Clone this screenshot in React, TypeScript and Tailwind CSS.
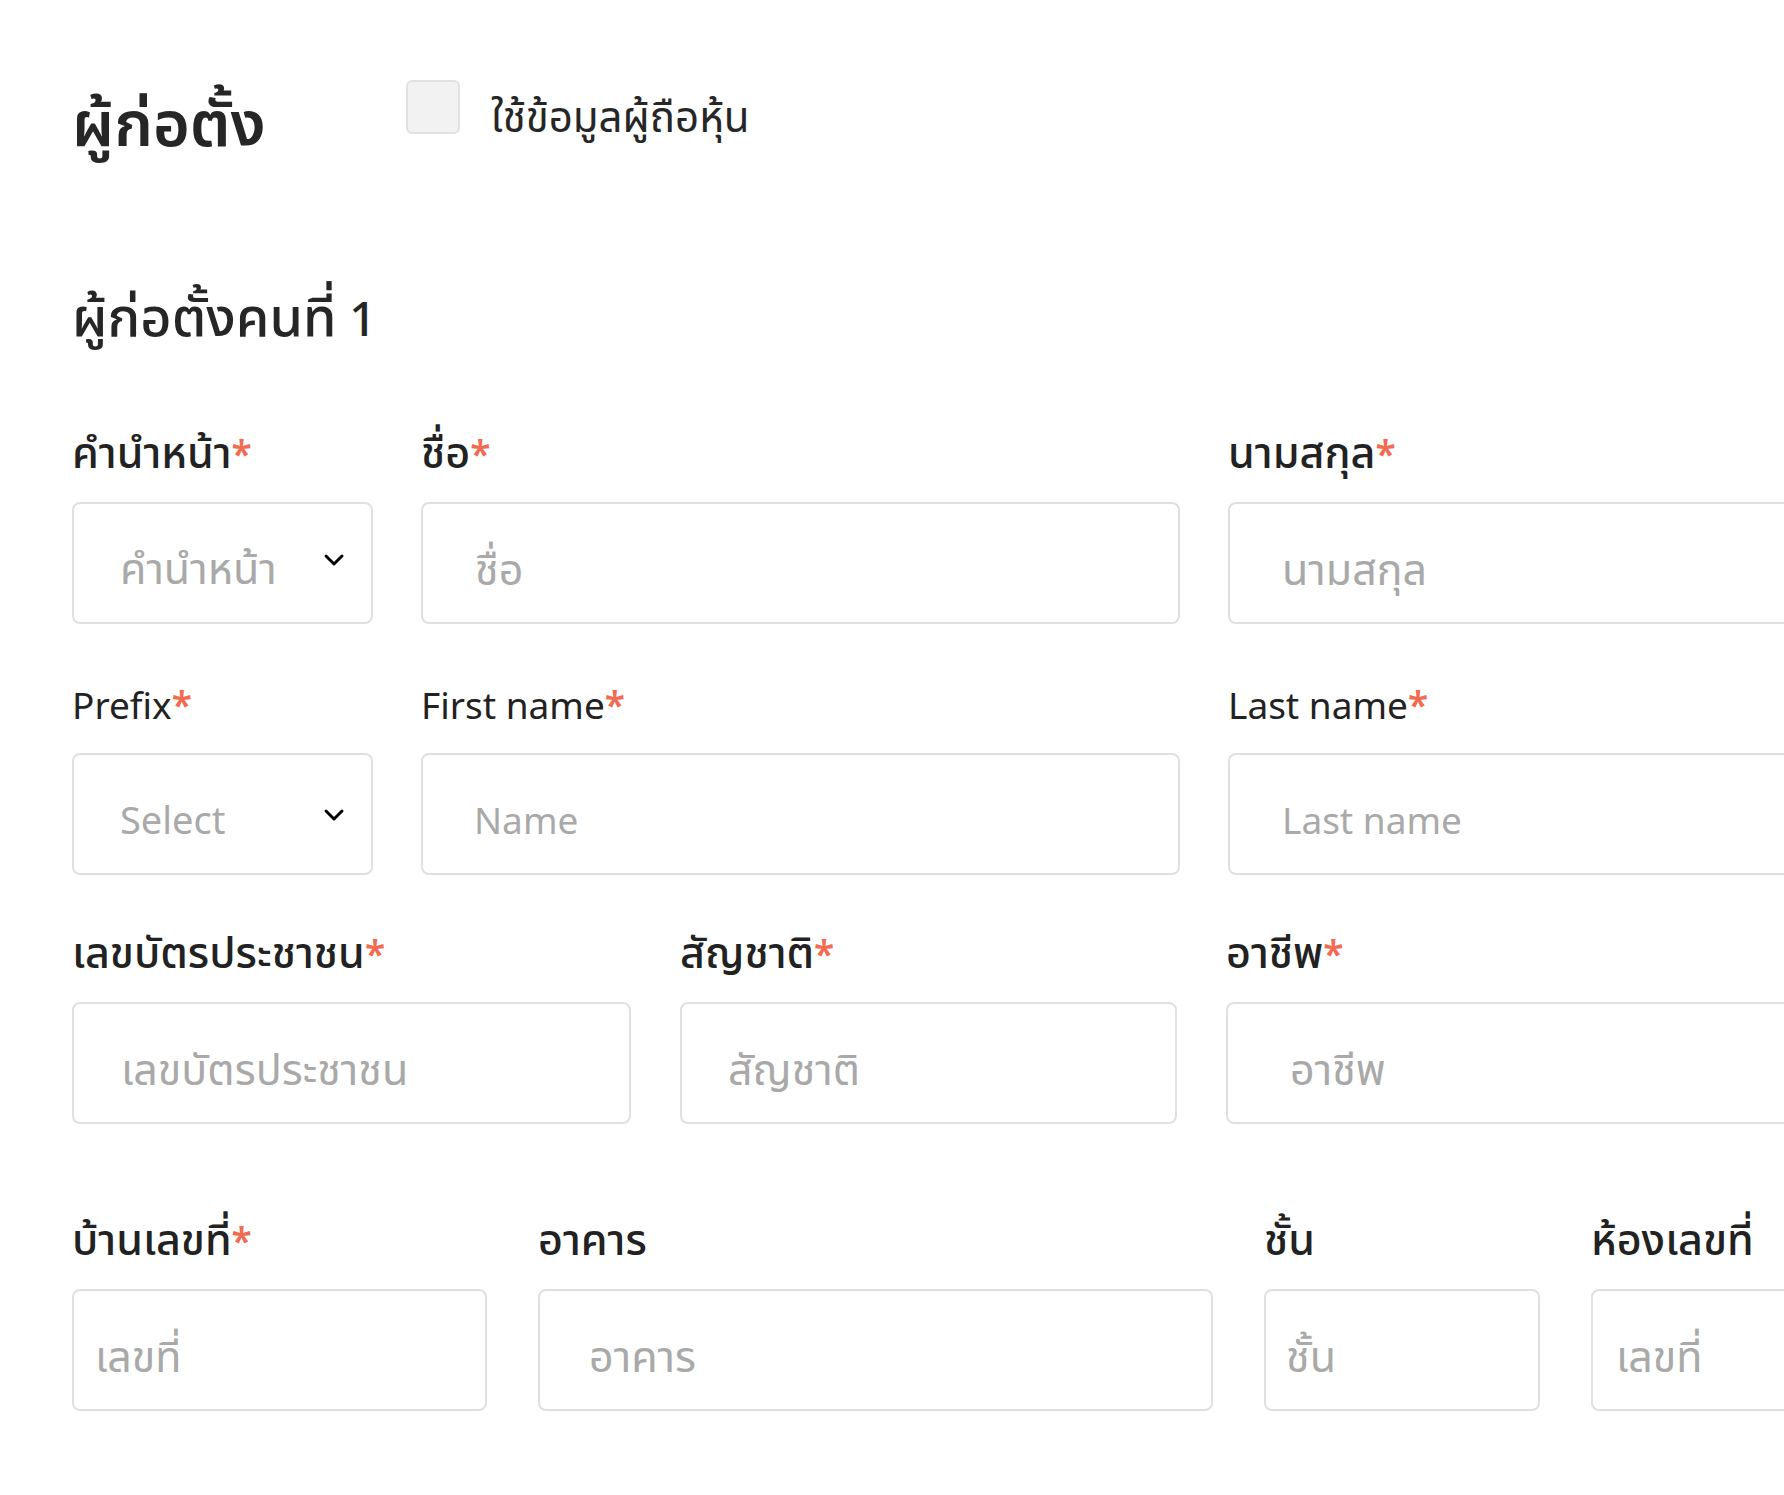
import { ChevronDown } from "lucide-react";

const font = { fontFamily: '"Noto Sans", "Noto Sans Thai", sans-serif' };
const isThai = (s: string) => /[\u0E00-\u0E7F]/.test(s);

function Label({ text, required }: { text: string; required?: boolean }) {
  const thai = isThai(text);
  return (
    <div
      className={
        thai
          ? "text-[43px] leading-[48px] font-medium text-[#222] whitespace-nowrap mb-[26px]"
          : "text-[37px] leading-[48px] font-normal text-[#222] whitespace-nowrap mb-[24px]"
      }
    >
      {text}
      {required && <span className="text-[#f26a4f] text-[37px] leading-none font-semibold">*</span>}
    </div>
  );
}

function TextBox({ placeholder, pad = "pl-[52px]" }: { placeholder: string; pad?: string }) {
  const thai = isThai(placeholder);
  return (
    <input
      placeholder={placeholder}
      className={`w-full h-[122px] rounded-[8px] border-2 border-[#e0e0e0] bg-white ${pad} pr-4 pt-[10px] ${
        thai ? "text-[43px]" : "text-[37px]"
      } text-[#222] placeholder:text-[#a9a9a9] outline-none`}
      style={font}
    />
  );
}

function SelectBox({ placeholder, chevron = "" }: { placeholder: string; chevron?: string }) {
  const thai = isThai(placeholder);
  return (
    <button
      type="button"
      className={`w-full h-[122px] rounded-[8px] border-2 border-[#e0e0e0] bg-white pl-[46px] pr-[21px] pt-[10px] flex items-center justify-between ${
        thai ? "text-[43px]" : "text-[38px]"
      } text-[#a9a9a9]`}
      style={font}
    >
      <span>{placeholder}</span>
      <ChevronDown size={32} strokeWidth={2.2} className={`text-black ${chevron}`} />
    </button>
  );
}

function Field({ label, required, children }: { label: string; required?: boolean; children: React.ReactNode }) {
  return (
    <div className="flex flex-col">
      <Label text={label} required={required} />
      {children}
    </div>
  );
}

export default function App() {
  return (
    <div className="w-full min-h-screen bg-white overflow-hidden" style={font}>
      <div className="w-[2100px] pl-[72px] pt-[80px] pb-20">
        <div className="flex items-start">
          <h1 className="mt-[2px] w-[334px] text-[63px] leading-[80px] font-semibold text-[#262626]">ผู้ก่อตั้ง</h1>
          <label className="flex items-start gap-[31px]">
            <span className="w-[54px] h-[54px] rounded-[6px] bg-[#f2f2f2] border-2 border-[#e2e2e2]" />
            <span className="mt-[9px] text-[42px] leading-[54px] text-[#262626]">ใช้ข้อมูลผู้ถือหุ้น</span>
          </label>
        </div>

        <h2 className="mt-[121px] text-[48px] leading-[64px] font-medium text-[#262626]">
          <span className="text-[54px]">ผู้ก่อตั้งคนที่</span> 1
        </h2>

        <div className="mt-[78px] grid grid-cols-[301px_759px_759px] gap-x-[48px]">
          <Field label="คำนำหน้า" required>
            <SelectBox placeholder="คำนำหน้า" chevron="-mt-4" />
          </Field>
          <Field label="ชื่อ" required>
            <TextBox placeholder="ชื่อ" />
          </Field>
          <Field label="นามสกุล" required>
            <TextBox placeholder="นามสกุล" />
          </Field>
        </div>

        <div className="mt-[57px] grid grid-cols-[301px_759px_759px] gap-x-[48px]">
          <Field label="Prefix" required>
            <SelectBox placeholder="Select" chevron="-mt-2" />
          </Field>
          <Field label="First name" required>
            <TextBox placeholder="Name" pad="pl-[51px]" />
          </Field>
          <Field label="Last name" required>
            <TextBox placeholder="Last name" pad="pl-[52px]" />
          </Field>
        </div>

        <div className="mt-[53px] grid grid-cols-[559px_497px_700px] gap-x-[49px]">
          <Field label="เลขบัตรประชาชน" required>
            <TextBox placeholder="เลขบัตรประชาชน" pad="pl-[47px]" />
          </Field>
          <Field label="สัญชาติ" required>
            <TextBox placeholder="สัญชาติ" pad="pl-[46px]" />
          </Field>
          <Field label="อาชีพ" required>
            <TextBox placeholder="อาชีพ" pad="pl-[62px]" />
          </Field>
        </div>

        <div className="mt-[91px] grid grid-cols-[415px_675px_276px_300px] gap-x-[51px]">
          <Field label="บ้านเลขที่" required>
            <TextBox placeholder="เลขที่" pad="pl-[21px]" />
          </Field>
          <Field label="อาคาร">
            <TextBox placeholder="อาคาร" pad="pl-[49px]" />
          </Field>
          <Field label="ชั้น">
            <TextBox placeholder="ชั้น" pad="pl-[20px]" />
          </Field>
          <Field label="ห้องเลขที่">
            <TextBox placeholder="เลขที่" pad="pl-[23px]" />
          </Field>
        </div>
      </div>
    </div>
  );
}
